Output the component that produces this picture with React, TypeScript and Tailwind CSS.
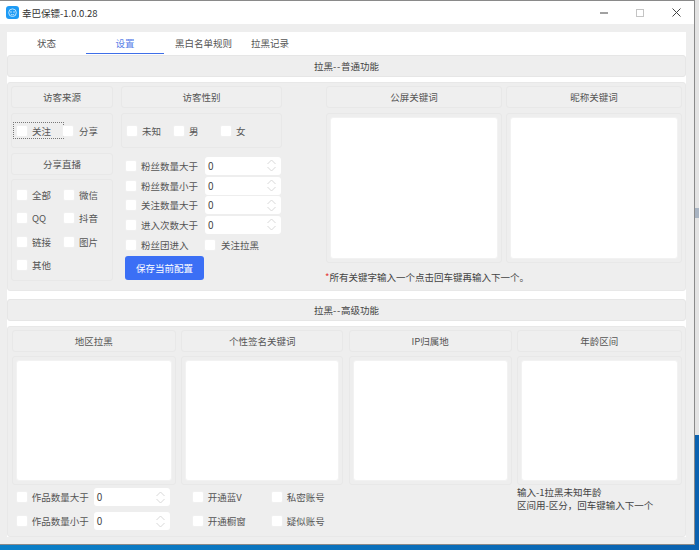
import React from 'react';

const Check = () => (
    <span className="block w-[12px] h-[12px] shrink-0 rounded-[2px] bg-white border border-[#f0f0f0]" />
);

const CheckLabel = ({ label, className = '' }: { label: string; className?: string }) => (
    <div className={`flex items-center gap-[4px] ${className}`}>
        <Check />
        <span className="whitespace-nowrap">{label}</span>
    </div>
);

const Head = ({ label, className = '' }: { label: string; className?: string }) => (
    <div className={`h-[22px] flex items-center justify-center rounded-[3px] border border-[#e8e8e8] bg-[#efefef] ${className}`}>
        {label}
    </div>
);

const Box = ({ children, className = '' }: { children?: React.ReactNode; className?: string }) => (
    <div className={`rounded-[3px] border border-[#e8e8e8] ${className}`}>{children}</div>
);

const Spin = ({ value = '0', width = 'w-[76px]' }: { value?: string; width?: string }) => (
    <div className={`${width} h-[18px] flex items-center justify-between pl-[3px] pr-[5px] rounded-[3px] bg-white text-[10px]`}>
        <span className="text-[#444]">{value}</span>
        <svg width="9" height="13" viewBox="0 0 9 13" fill="none" stroke="#d8d8d8" strokeWidth="1">
            <path d="M0.5 5 4.5 1 8.5 5M0.5 8 4.5 12 8.5 8" />
        </svg>
    </div>
);

const TextBox = ({ className = '' }: { className?: string }) => (
    <div className={`rounded-[3px] bg-white border border-[#f2f2f2] ${className}`} />
);

// section titles all read 拉黑--xxx, the dashes need a bit of air
const Section = ({ label }: { label: string }) => (
    <div className="h-[22px] flex items-center justify-center rounded-[3px] border border-[#e6e6e6] bg-[#eeeeee] text-[#444]">
        拉黑<span className="tracking-[0.8px]">--</span>{label}
    </div>
);

const Logo = () => (
    <svg width="13" height="13" viewBox="0 0 13 13" className="shrink-0">
        <rect width="13" height="13" rx="3" fill="#1e9bf5" />
        <circle cx="6.5" cy="6.7" r="3.8" fill="none" stroke="#bfe6ff" strokeWidth="1" />
        <circle cx="5" cy="6" r="0.7" fill="#e8f6ff" />
        <circle cx="8" cy="6" r="0.7" fill="#e8f6ff" />
        <path d="M4.8 8.2Q6.5 9.5 8.2 8.2" fill="none" stroke="#e8f6ff" strokeWidth="0.7" />
    </svg>
);

const filterRows = ['粉丝数量大于', '粉丝数量小于', '关注数量大于', '进入次数大于'];

export default function App() {
    return (
        <div
            className="w-[699px] h-[550px] overflow-hidden flex flex-col bg-linear-to-r from-[#0b80c8] to-[#0a62b0] text-[9.5px] leading-[12px] text-[#555]"
            style={{ fontFamily: '"Noto Sans CJK SC", "Noto Sans", sans-serif' }}
        >
            <div className="flex h-[545px] shrink-0">
                {/* window */}
                <div className="w-[695px] h-[545px] shrink-0 flex flex-col bg-[#eeeeee] border-t border-r border-b border-[#8a8a8a]">
                    <div className="h-[23px] shrink-0 flex items-center bg-white pl-[6px] text-[#333]">
                        <Logo />
                        <span className="ml-[3px]">幸巴保镖-1.0.0.28</span>
                        <div className="ml-auto flex items-center">
                            <svg width="8" height="8" viewBox="0 0 8 8" className="mr-[28px]">
                                <path d="M0 4H8" stroke="#444" strokeWidth="1" />
                            </svg>
                            <svg width="8" height="8" viewBox="0 0 8 8" className="mr-[28px]">
                                <rect x="0.5" y="0.5" width="7" height="7" fill="none" stroke="#c4c4c4" />
                            </svg>
                            <svg width="9" height="9" viewBox="0 0 9 9" className="mr-[13px]">
                                <path d="M0.5 0.5 8.5 8.5M8.5 0.5 0.5 8.5" stroke="#444" strokeWidth="1" />
                            </svg>
                        </div>
                    </div>

                    <div className="mt-[8px] mx-[7px] w-[679px] flex flex-col bg-white">
                        {/* tabs */}
                        <div className="h-[22px] flex items-center text-[#555]">
                            <div className="w-[79px] h-full flex items-center justify-center">状态</div>
                            <div className="w-[78px] h-full flex items-center justify-center border-b-[1px] border-[#3f6fe8] text-[#5a7fe8]">设置</div>
                            <div className="w-[79px] h-full flex items-center justify-center">黑白名单规则</div>
                            <div className="w-[54px] h-full flex items-center justify-center">拉黑记录</div>
                        </div>

                        <div className="mt-[1px]">
                            <Section label="普通功能" />
                        </div>

                        {/* normal panel */}
                        <div className="mt-[5px] h-[209px] flex bg-[#eeeeee] rounded-[3px] border border-[#e8e8e8] pt-[3px] pl-[3px]">
                            <div className="w-[102px] shrink-0 flex flex-col">
                                <Head label="访客来源" />
                                <Box className="mt-[5px] h-[35px] flex items-center pl-[1px]">
                                    <div className="w-[51px] h-[17px] flex items-center gap-[4px] pl-[2px] border border-dotted border-[#777]">
                                        <Check />
                                        <span>关注</span>
                                    </div>
                                    <div className="flex items-center gap-[5px] -ml-[2px]">
                                        <Check />
                                        <span>分享</span>
                                    </div>
                                </Box>
                                <Head label="分享直播" className="mt-[5px]" />
                                <Box className="mt-[4px] h-[102px] pl-[4px] pt-[3px]">
                                    <div className="grid grid-cols-[47px_40px] auto-rows-[23.5px] items-center">
                                        <CheckLabel label="全部" />
                                        <CheckLabel label="微信" />
                                        <CheckLabel label="QQ" />
                                        <CheckLabel label="抖音" />
                                        <CheckLabel label="链接" />
                                        <CheckLabel label="图片" />
                                        <CheckLabel label="其他" />
                                    </div>
                                </Box>
                            </div>

                            <div className="w-[161px] shrink-0 ml-[8px] flex flex-col">
                                <Head label="访客性别" />
                                <Box className="mt-[5px] h-[35px] grid grid-cols-[47px_47px_47px] items-center pl-[4px]">
                                    <CheckLabel label="未知" />
                                    <CheckLabel label="男" />
                                    <CheckLabel label="女" />
                                </Box>
                                <div className="mt-[8px] flex flex-col pl-[4px]">
                                    {filterRows.map((label) => (
                                        <div key={label} className="h-[19.7px] flex items-center">
                                            <CheckLabel label={label} className="w-[80px]" />
                                            <Spin />
                                        </div>
                                    ))}
                                    <div className="h-[19.7px] flex items-center">
                                        <CheckLabel label="粉丝团进入" className="w-[79px]" />
                                        <CheckLabel label="关注拉黑" className="gap-[5px]" />
                                    </div>
                                    <button className="mt-[2px] w-[79px] h-[24px] rounded-[3px] bg-[#3b6ff5] text-white text-[9.5px]">
                                        保存当前配置
                                    </button>
                                </div>
                            </div>

                            <div className="ml-[44px] w-[356px] shrink-0 flex flex-col">
                                <div className="grid grid-cols-[176px_176px] gap-x-[4px]">
                                    <Head label="公屏关键词" />
                                    <Head label="昵称关键词" />
                                </div>
                                <div className="mt-[5px] grid grid-cols-[176px_176px] gap-x-[4px]">
                                    <Box className="h-[150px] p-[3px]">
                                        <TextBox className="h-full" />
                                    </Box>
                                    <Box className="h-[150px] p-[3px]">
                                        <TextBox className="h-full" />
                                    </Box>
                                </div>
                                <div className="mt-[8px] -ml-[1px] text-[#444] whitespace-nowrap">
                                    <span className="text-[#e53935]">*</span>所有关键字输入一个点击回车键再输入下一个。
                                </div>
                            </div>
                        </div>

                        <div className="mt-[8px]">
                            <Section label="高级功能" />
                        </div>

                        {/* advanced panel */}
                        <div className="mt-[5px] h-[211px] flex flex-col bg-[#eeeeee] rounded-[3px] border border-[#e8e8e8] pt-[3px] pl-[3.7px]">
                            <div className="grid grid-cols-[164.3px_162px_163px_165px] gap-x-[5.3px]">
                                <Head label="地区拉黑" />
                                <Head label="个性签名关键词" />
                                <Head label="IP归属地" />
                                <Head label="年龄区间" />
                            </div>
                            <div className="mt-[4px] grid grid-cols-[164.3px_162px_163px_165px] gap-x-[5.3px]">
                                {[0, 1, 2, 3].map((i) => (
                                    <Box key={i} className="h-[129px] p-[3px]">
                                        <TextBox className="h-full" />
                                    </Box>
                                ))}
                            </div>
                            <div className="mt-[3px] grid grid-cols-[164.3px_162px_163px_165px] gap-x-[5.3px]">
                                <div className="pl-[4px] flex flex-col gap-[6px]">
                                    <div className="flex items-center">
                                        <CheckLabel label="作品数量大于" className="w-[78px]" />
                                        <Spin />
                                    </div>
                                    <div className="flex items-center">
                                        <CheckLabel label="作品数量小于" className="w-[78px]" />
                                        <Spin />
                                    </div>
                                </div>
                                <div className="pl-[10.5px] grid grid-cols-[79px_70px] auto-rows-[18px] gap-y-[6px] items-center">
                                    <CheckLabel label="开通蓝V" />
                                    <CheckLabel label="私密账号" />
                                    <CheckLabel label="开通橱窗" />
                                    <CheckLabel label="疑似账号" />
                                </div>
                                <div />
                                <div className="-mt-[2px] leading-[13px] text-[#444]">
                                    <div>输入-1拉黑未知年龄</div>
                                    <div>区间用-区分，回车键输入下一个</div>
                                </div>
                            </div>
                        </div>
                    </div>
                </div>

                {/* desktop behind the window */}
                <div className="flex-1 flex flex-col">
                    <div className="h-[208px] bg-[#e3e3e3]" />
                    <div className="h-[10px] bg-[#a9b4c2]" />
                    <div className="h-[217px] bg-[#e3e3e3]" />
                    <div className="flex-1 bg-[#0a62b0]" />
                </div>
            </div>
        </div>
    );
}
